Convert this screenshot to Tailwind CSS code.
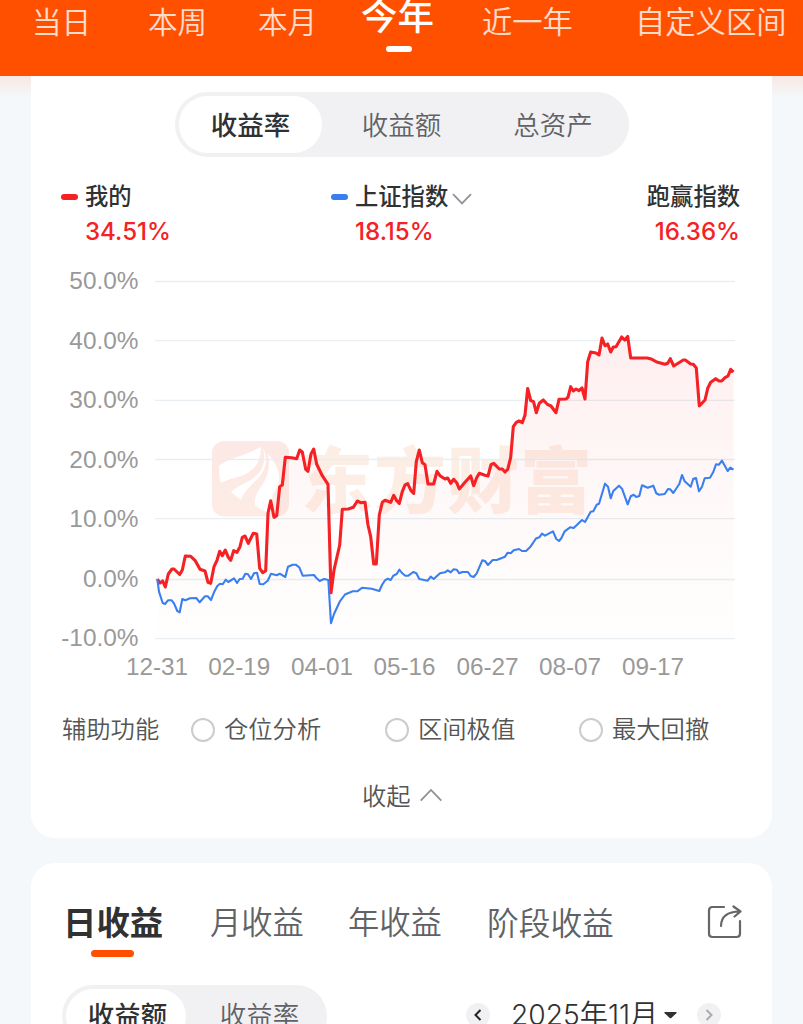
<!DOCTYPE html>
<html lang="zh-CN">
<head>
    <meta charset="UTF-8">
    <meta name="viewport" content="width=device-width, initial-scale=1">
    <title>收益分析</title>
    <script src="https://cdn.jsdelivr.net/npm/@tailwindcss/browser@4"></script>
</head>
<body class="h-[1024px] w-[803px] overflow-hidden bg-[#f4f8fa] font-['Liberation_Sans','Noto_Sans_CJK_SC',sans-serif] text-[#303133]">
    <header class="flex h-[76px] items-start bg-[#ff5000] pl-[32px] whitespace-nowrap text-white">
        <nav class="flex items-start pt-px text-[29.6px] leading-[44px] font-[350] text-white/80">
            <a class="w-[116px]">当日</a>
            <a class="w-[110px]">本周</a>
            <a class="w-[103px]">本月</a>
            <a class="-mt-[5px] flex w-[121px] flex-col text-[36.5px] font-medium text-white">
                <span>今年</span>
                <span class="mt-[6px] ml-[25px] h-[6px] w-[26px] rounded-full bg-white"></span>
            </a>
            <a class="w-[153px] text-[30.3px]">近一年</a>
            <a class="text-[30.3px]">自定义区间</a>
        </nav>
    </header>

    <div class="bg-linear-to-b from-[#f8e8e4] to-[#f4f8fa] to-[22px] px-[31px]">
        <section class="h-[762px] rounded-b-[24px] bg-white pt-[16px]">
            <div class="ml-[144px] flex h-[65px] w-[454px] items-center rounded-full bg-[#f1f1f4] p-[4px] text-[26.5px] text-[#606266]">
                <span class="flex h-[57px] w-[143px] items-center justify-center rounded-full bg-white pt-[5px] font-medium text-[#303133]">收益率</span>
                <span class="w-[159px] pt-[5px] text-center font-[350]">收益额</span>
                <span class="w-[144px] pt-[5px] text-center font-[350]">总资产</span>
            </div>

            <div class="mt-[23px] flex pr-[32px] pl-[30px] text-[23.3px] leading-[34px]">
                <div class="flex w-[270px]">
                    <i class="mt-[14px] mr-[7px] h-[6px] w-[17px] rounded-full bg-[#f52124]"></i>
                    <div>
                        <p class="font-medium">我的</p>
                        <p class="pt-px font-['Inter'] text-[24.1px] font-[450] text-[#f52124]">34.51%</p>
                    </div>
                </div>
                <div class="flex">
                    <i class="mt-[14px] mr-[7px] h-[6px] w-[17px] rounded-full bg-[#3a7ff0]"></i>
                    <div>
                        <p class="flex items-center font-medium">上证指数
                            <svg class="mt-[3px] ml-[4px]" width="20" height="12" viewBox="0 0 20 12" fill="none" stroke="#909399" stroke-width="1.8"><path d="M1 1.2 10 10.4 19 1.2"/></svg>
                        </p>
                        <p class="pt-px font-['Inter'] text-[24.1px] font-[450] text-[#f52124]">18.15%</p>
                    </div>
                </div>
                <div class="ml-auto text-right">
                    <p class="font-medium">跑赢指数</p>
                    <p class="pt-px font-['Inter'] text-[24.1px] font-[450] text-[#f52124]">16.36%</p>
                </div>
            </div>

            <svg class="mt-[11px] block" width="741" height="430" viewBox="31 260 741 430">
                <defs>
                    <linearGradient id="area" gradientUnits="userSpaceOnUse" x1="0" y1="336" x2="0" y2="639">
                        <stop offset="0" stop-color="#f52124" stop-opacity=".075"/>
                        <stop offset=".6" stop-color="#f52124" stop-opacity=".025"/>
                        <stop offset="1" stop-color="#f52124" stop-opacity=".008"/>
                    </linearGradient>
                    <linearGradient id="logo" x1="0" y1="0" x2="0" y2="1">
                        <stop offset="0" stop-color="#fce8e5"/>
                        <stop offset="1" stop-color="#fdece4"/>
                    </linearGradient>
                </defs>
                <!-- watermark -->
                <rect x="212" y="441" width="77" height="75.500" rx="12" fill="url(#logo)"/>
                <path fill="#fff" d="M261 447C245 456 226 459 219 466c0 6 0 11 2 17 7-4 15-5 23-8 11-5 17-14 17-28Z"/>
                <path fill="#fff" d="M263 448c4 16-2 26-14 33-8 4-14 7-18 11l10 8c5-13 15-17 21-27 5-8 5-17 1-25Z"/>
                <path fill="#fff" d="M268 454c3 15-1 25-8 34-4 6-6 12-5 17 5 5 13 8 20 9-6-11-3-19 2-27 5-10 1-22-9-33Z"/>
                <text x="301" y="507" font-family="Noto Sans CJK SC" font-size="72" font-weight="900" letter-spacing="1" fill="#fdeee5">东方财富</text>
                <g stroke="#e8eef2" stroke-width="1.300">
                    <path d="M155 281.500H735M155 340.700H735M155 400.300H735M155 459.500H735M155 518.700H735M155 579.500H735M155 638.700H735"/>
                </g>
                <path id="areaPath" fill="url(#area)"/>
                <path id="mine" fill="none" stroke="#f52124" stroke-width="3.100" stroke-linejoin="round"/>
                <path id="index" fill="none" stroke="#3a7ff0" stroke-width="2.100" stroke-linejoin="round"/>
                <g font-family="Liberation Sans" font-size="24.400" fill="#999" text-anchor="end">
                    <text x="138.500" y="289">50.0%</text>
                    <text x="138.500" y="348.500">40.0%</text>
                    <text x="138.500" y="408">30.0%</text>
                    <text x="138.500" y="467.500">20.0%</text>
                    <text x="138.500" y="527">10.0%</text>
                    <text x="138.500" y="586.500">0.0%</text>
                    <text x="138.500" y="646.400">-10.0%</text>
                </g>
                <g font-family="Liberation Sans" font-size="24.300" fill="#999" text-anchor="middle">
                    <text x="157" y="675">12-31</text>
                    <text x="239.300" y="675">02-19</text>
                    <text x="322" y="675">04-01</text>
                    <text x="404.500" y="675">05-16</text>
                    <text x="487.500" y="675">06-27</text>
                    <text x="570" y="675">08-07</text>
                    <text x="653" y="675">09-17</text>
                </g>
            </svg>

            <div class="mt-[21px] flex items-center pl-[31px] text-[24.3px] leading-[36px] font-[350] text-[#555]">
                <span class="w-[129px] pt-px">辅助功能</span>
                <label class="flex w-[194px] items-center gap-[9px]"><i class="size-[24px] rounded-full border-2 border-[#ccc]"></i><span class="pt-px">仓位分析</span></label>
                <label class="flex w-[194px] items-center gap-[9px]"><i class="size-[24px] rounded-full border-2 border-[#ccc]"></i><span class="pt-px">区间极值</span></label>
                <label class="flex items-center gap-[9px]"><i class="size-[24px] rounded-full border-2 border-[#ccc]"></i><span class="pt-px">最大回撤</span></label>
            </div>

            <div class="mt-[30px] flex items-center pl-[331px] text-[24.3px] leading-[36px] font-[350] text-[#555]">
                <span class="pt-px">收起</span>
                <svg class="mb-[4px] ml-[9px]" width="22" height="14" viewBox="0 0 22 14" fill="none" stroke="#909090" stroke-width="1.800"><path d="M.7 12.700 11 2 21.300 12.700"/></svg>
            </div>
        </section>
    </div>

    <section class="mx-[31px] mt-[25px] h-[161px] overflow-hidden rounded-t-[24px] bg-white pt-[37px]">
        <div class="flex items-start pl-[32px] text-[31.3px] leading-[48px] font-[350] text-[#606266]">
            <div class="flex w-[147px] flex-col text-[33.4px] font-bold text-[#303133]">
                <span>日收益</span>
                <span class="mt-[2px] ml-[28px] h-[7px] w-[43px] rounded-full bg-[#ff5000]"></span>
            </div>
            <span class="w-[138px]">月收益</span>
            <span class="w-[139px]">年收益</span>
            <span class="w-[220px] text-[31.7px]">阶段收益</span>
            <svg class="mt-[5px]" width="36" height="35" viewBox="0 0 36 35" fill="none" stroke="#666" stroke-width="2.200" stroke-linecap="round" stroke-linejoin="round">
                <path d="M17 2H5.500Q2 2 2 5.500V28.500Q2 32 5.500 32H29.500Q33 32 33 28.500V16"/>
                <path d="M14 21C14 12 20 6.500 33 6.500M26.500 1.500 33.500 6.500 27.500 11.500"/>
            </svg>
        </div>
        <div class="mt-[28px] flex items-start pl-[31px]">
            <div class="flex h-[62px] w-[265px] items-center rounded-full bg-[#f1f1f4] p-[4px] text-[26.5px] text-[#606266]">
                <span class="flex h-[54px] w-[124px] items-center justify-center rounded-full bg-white pt-px pl-[3px] font-medium text-[#303133]">收益额</span>
                <span class="w-[141px] pt-px pl-[10px] text-center font-[350]">收益率</span>
            </div>
            <div class="mt-[12px] ml-[139px] flex items-center">
                <span class="flex size-[24px] items-center justify-center rounded-full bg-[#f1f1f4]">
                    <svg width="10" height="14" viewBox="0 0 10 14" fill="none" stroke="#222" stroke-width="2"><path d="M7.500 2 2.500 7 7.500 12"/></svg>
                </span>
                <span class="ml-[21px] w-[149px] font-['Inter','Noto_Sans_CJK_SC',sans-serif] text-[28.2px] leading-[36px] whitespace-nowrap font-[350]">2025年11月</span>
                <svg class="ml-[4px]" width="13" height="7" viewBox="0 0 13 7" fill="#303133"><path d="M.8 0H12.200Q13 .5 12.300 1.200L7.300 6Q6.500 6.700 5.700 6L.7 1.200Q0 .5 .8 0Z"/></svg>
                <span class="ml-[20px] flex size-[24px] items-center justify-center rounded-full bg-[#f1f1f4]">
                    <svg width="10" height="14" viewBox="0 0 10 14" fill="none" stroke="#aaa" stroke-width="2"><path d="M2.500 2 7.500 7 2.500 12"/></svg>
                </span>
            </div>
        </div>
    </section>

    <script>
        const mine = `157.3,579 160,583 162.7,581 165.3,587 168.3,574 172,569 174,569 179.7,574.5 182.3,570 185.3,556 190.7,556.3 195,560.3 200,569.3 205,571 208,582.3 210.7,583.3 214,566.7 217,560.3 219.7,551.3 222.3,555.7 225.3,550 228,556.7 230.7,560.3 233.7,550.7 237,552.3 240,546.7 242.3,537.3 245,536 248.3,543.3 253.3,533.3 256.7,534 259.7,568.3 262.7,572.7 265.7,570.7 268,513.3 270.7,500.7 274,517.3 276.7,515.7 279.7,486.7 282.3,485 285.3,457.3 291.7,457.7 296.7,458.7 299.7,450 302.3,452 305.7,469.3 308,471.3 311,454 313.7,449 316.7,464.3 322.3,475.7 328,484.3 331,592.7 334,570 339.7,545 342.3,509.3 348.3,509 353.3,507.3 357.3,501 360.7,502.7 365,502.3 368,525 370.7,536.7 373.7,564 376.3,564 379.3,515 382.3,502.3 385,500.3 390.7,502.3 393.7,495.3 396.7,500.7 399.3,503.3 402.3,491.7 405,485 407.7,483.7 411,490.7 413.7,493.3 416.3,461.7 419.3,450 422.3,462.7 425,464.7 428,484 433.7,484 437,471.3 440,475.7 445,479 447.7,478 450.7,483.3 453.7,479.3 456.7,482.7 459.3,489 465,482.3 470.7,476 473.7,485.7 476.7,477.7 479.3,473.3 485,475.3 488,476 491,464.7 493.7,463.3 499.3,469 502.3,469 505,472 507.7,469.3 510.7,457.3 513.3,426.7 516.3,422.3 519,421 522.3,422.7 525,415 527.7,388.5 530.7,400.5 533.5,401.7 536.3,412.7 539.3,403.3 543.3,400 547.3,404.3 551,406 556,412.7 559,399.3 566,399 568,397.3 570.7,386.7 573.3,391 576,389 579,390.7 582,388 585,399 587.7,361.7 590.7,352 596,353 599,355 602,338 605,345.7 607.7,344 610.7,352 613.3,347 616,346.7 621.7,337 624.7,340 627.7,336.5 630.7,358 647.3,358 652,359.3 656.7,362 665,364.3 667.7,363.3 670.3,358.7 673.7,366 683.3,360 685.3,360 690.7,364 693.3,364.3 696.3,368 699.3,406 705,400 707.7,388.3 710.7,382.3 715.7,378.7 719,381 721.7,381 725,377.7 728,376 730.7,369.3 733.5,372`;
        const index = `157.3,579 159,591.7 162.7,603 165,604 168,600.3 171.7,600.3 174,603.3 177.3,611 179.7,612.3 182.3,599 185.3,600.3 190,598.3 196.3,598 199.7,602.3 205,596.3 207.7,596.3 211,600 214,592.3 217.3,586 220,583.7 222.7,584.3 225.7,579.7 228.3,582 234,578.3 237,583 239.7,579 242.7,578.7 245.3,573.7 248,574.3 251,579 254,573.3 257,572.7 259.7,584 263.3,584.3 267.7,580.7 271,573.7 276.7,575.3 279.7,573.7 285.3,577 288,566.7 292.7,564.7 295.7,564.7 299.3,567.3 302.7,575.7 314,575 316.7,578.3 319.7,581 324,579 328.3,580 331,623.3 334,614 339.7,601.7 345,594.5 352.7,591.3 357.3,591.3 362.3,587.7 371.7,588.7 379.3,591 382,585 385,580.3 387.7,578.7 390.7,580 393.3,575.7 396.7,574 399.3,569.7 402.3,573.3 405.3,575.7 408.3,575.7 413.3,572 416.3,573.3 419.3,579 427.7,580.7 430.7,576.7 433.7,579 440,573.3 445,572.3 447.7,570.3 450.7,572.3 453.7,569.3 456.7,569.7 459.3,573.3 462.3,572 468,572 470.7,576 473.7,577 476.7,573.3 482.3,560.3 485,561 488,565 492.7,560 496.7,560 505,556.7 507.7,552.7 510.7,553.3 513.7,550.3 519,549 522,551 526,551 530,547.3 536,538.5 539.3,537.3 542,533.7 545,535.7 553,531.3 556.3,539 559,541 561.3,538.3 564.7,531.3 570,527.3 573.7,528 582,520 585,522 590.7,511.7 593.3,511.3 596.7,504.7 599,503.7 605,483.7 608,486.7 610.7,498.3 613.3,491 619,485.7 622,488.7 627.7,504.3 630.7,496.3 633.7,494.7 636.3,497 639.3,496 642,485.3 647.7,487.7 653.3,485.7 656.3,493.3 659,494.7 664.7,494 668,489 670.3,489.3 673.3,493 679.3,484 682,475 684.7,481.3 690.7,486.7 693.3,478.7 696,478 699,491.3 702,486.7 704.7,478.3 710,477.7 713.3,472 716,464.3 719,464.7 722,460.7 727.7,471 730.3,467.7 733.5,469.7`;
        document.getElementById('mine').setAttribute('d', 'M' + mine);
        document.getElementById('index').setAttribute('d', 'M' + index);
        document.getElementById('areaPath').setAttribute('d', 'M' + mine + ' L733.5,639 157.3,639Z');
    </script>
</body>
</html>
